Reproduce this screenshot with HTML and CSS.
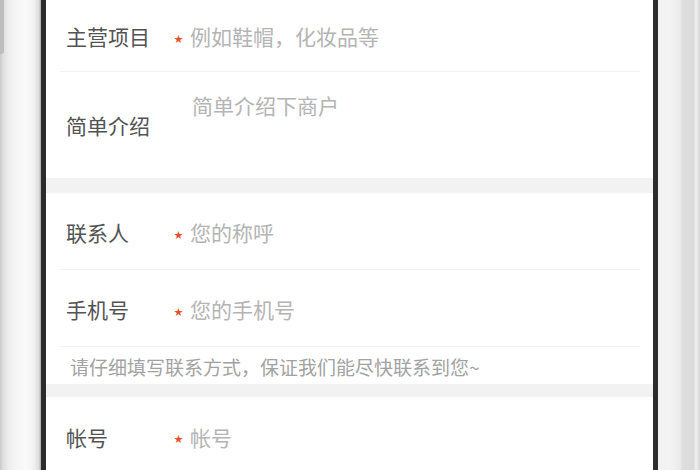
FILE: index.html
```html
<!DOCTYPE html>
<html lang="zh-CN">
<head>
    <meta charset="UTF-8">
    <meta name="viewport" content="width=device-width, initial-scale=1.0">
    <title>商户入驻</title>
    <link rel="stylesheet" href="styles.css">
</head>
<body>

<div class="phone">
    <div class="bezel-left">
        <div class="side-key"></div>
    </div>

    <div class="screen">
        <div class="field field-first">
            <label class="field-label" for="items">主营项目</label>
            <span class="required">★</span>
            <input class="field-input" type="text" id="items" placeholder="例如鞋帽，化妆品等">
        </div>
        <div class="field field-area">
            <label class="field-label" for="intro">简单介绍</label>
            <span class="required"></span>
            <textarea class="field-input field-textarea" id="intro" placeholder="简单介绍下商户"></textarea>
        </div>

        <div class="gap"></div>

        <div class="field">
            <label class="field-label" for="contact">联系人</label>
            <span class="required">★</span>
            <input class="field-input" type="text" id="contact" placeholder="您的称呼">
        </div>
        <div class="field">
            <label class="field-label" for="mobile">手机号</label>
            <span class="required">★</span>
            <input class="field-input" type="text" id="mobile" placeholder="您的手机号">
        </div>
        <p class="note">请仔细填写联系方式，保证我们能尽快联系到您~</p>

        <div class="gap gap-small"></div>

        <div class="field field-last">
            <label class="field-label" for="account">帐号</label>
            <span class="required">★</span>
            <input class="field-input" type="text" id="account" placeholder="帐号">
        </div>
    </div>

    <div class="bezel-right"></div>
</div>

</body>
</html>
```

FILE: styles.css
```css
html, body {
    margin: 0;
    padding: 0;
    height: 100%;
    overflow: hidden;
}

body {
    font-family: "Noto Sans CJK SC", "Noto Sans", sans-serif;
    background-color: #ffffff;
}

.phone {
    display: flex;
    height: 470px;
}

.bezel-left {
    width: 41px;
    background: linear-gradient(to right, #c9c9c9 0, #dedede 3px, #ececec 8px, #f5f5f5 16px, #fafafa 26px, #f1f1f1 34px, #dcdcdc 39px, #a8a8a8 41px);
}

.side-key {
    width: 4px;
    height: 54px;
    background-color: #bdbdbd;
    border-bottom-right-radius: 3px;
}

.bezel-right {
    width: 42px;
    background: linear-gradient(to right, #f1f1f1 0, #f3f3f3 12px, #ebebeb 22px, #dedede 24px, #dadada 36px, #ececec 37px, #ececec 39px, #d4d4d4 42px);
}

.screen {
    flex: 1;
    display: flex;
    flex-direction: column;
    background-color: #ffffff;
    border-left: 5px solid #2c2c2c;
    border-right: 5px solid #2c2c2c;
}

.field {
    display: flex;
    align-items: center;
    flex-shrink: 0;
    box-sizing: border-box;
    height: 77px;
    padding-top: 2px;
    margin: 0 13px 0 14px;
    border-bottom: 1px solid #f1f1f1;
}

.field-first {
    height: 72px;
    padding-top: 1px;
}

.field-area {
    height: 106px;
    padding-top: 0;
    border-bottom: none;
}

.field-last {
    border-bottom: none;
}

.field-label {
    width: 114px;
    padding-left: 6px;
    box-sizing: border-box;
    font-size: 21px;
    color: #535353;
    flex-shrink: 0;
}

.required {
    width: 16px;
    flex-shrink: 0;
    padding-top: 4px;
    font-size: 9px;
    color: #e8502a;
}

.field-input {
    flex: 1;
    border: none;
    outline: none;
    padding: 0;
    background: transparent;
    font-family: inherit;
    font-size: 21px;
    color: #535353;
}

.field-input::placeholder {
    color: #b4b4b4;
}

.field-textarea {
    align-self: flex-start;
    height: 60px;
    margin-top: 18px;
    margin-left: 2px;
    resize: none;
    line-height: 30px;
}

.gap {
    flex-shrink: 0;
    height: 15px;
    background-color: #f2f2f2;
}

.gap-small {
    height: 13px;
}

.note {
    flex-shrink: 0;
    margin: 0 13px 0 14px;
    height: 37px;
    padding-left: 10px;
    padding-top: 5px;
    box-sizing: border-box;
    font-size: 19px;
    line-height: 30px;
    color: #a2a2a2;
}
```
